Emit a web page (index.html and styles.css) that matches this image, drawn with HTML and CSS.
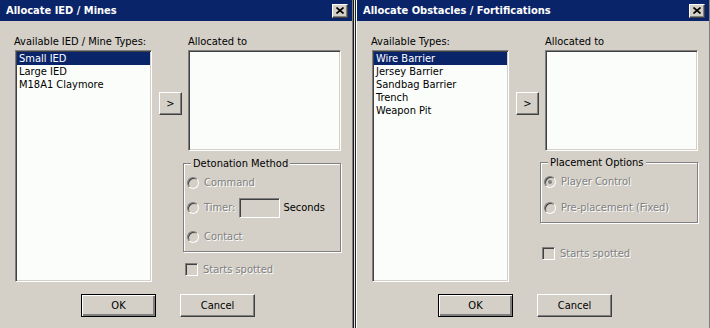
FILE: index.html
```html
<html>
	<head>
		<title>Allocate</title>
		<link rel="stylesheet" href="styles.css">
	</head>
	<body>
		<div class="desk">
			<div class="dialog">
				<div class="titlebar">
					<span class="title">Allocate IED / Mines</span>
					<span class="close"><svg width="8" height="7" viewBox="0 0 8 7"><path d="M0.5 0.5 L7.5 6.5 M7.5 0.5 L0.5 6.5" stroke="#000" stroke-width="1.6" fill="none"/></svg></span>
				</div>
				<div class="body">
					<div class="cols">
						<div class="col-list">
							<div class="label">Available IED / Mine Types:</div>
							<div class="listbox tall">
								<div class="item sel">Small IED</div>
								<div class="item">Large IED</div>
								<div class="item">M18A1 Claymore</div>
							</div>
						</div>
						<div class="col-mid">
							<div class="btn add">&gt;</div>
						</div>
						<div class="col-right">
							<div class="label indent">Allocated to</div>
							<div class="listbox alloc"></div>
							<div class="group det">
								<div class="group-title">Detonation Method</div>
								<div class="opt"><span class="radio"></span><span class="dis">Command</span></div>
								<div class="opt"><span class="radio"></span><span class="dis">Timer:</span><span class="field"></span><span class="unit">Seconds</span></div>
								<div class="opt"><span class="radio"></span><span class="dis">Contact</span></div>
							</div>
							<div class="check-row det-check"><span class="check"></span><span class="dis">Starts spotted</span></div>
						</div>
					</div>
					<div class="footer">
						<div class="btn push default">OK</div>
						<div class="btn push">Cancel</div>
					</div>
				</div>
			</div>
			<div class="dialog">
				<div class="titlebar">
					<span class="title">Allocate Obstacles / Fortifications</span>
					<span class="close"><svg width="8" height="7" viewBox="0 0 8 7"><path d="M0.5 0.5 L7.5 6.5 M7.5 0.5 L0.5 6.5" stroke="#000" stroke-width="1.6" fill="none"/></svg></span>
				</div>
				<div class="body">
					<div class="cols">
						<div class="col-list">
							<div class="label">Available Types:</div>
							<div class="listbox tall">
								<div class="item sel">Wire Barrier</div>
								<div class="item">Jersey Barrier</div>
								<div class="item">Sandbag Barrier</div>
								<div class="item">Trench</div>
								<div class="item">Weapon Pit</div>
							</div>
						</div>
						<div class="col-mid">
							<div class="btn add">&gt;</div>
						</div>
						<div class="col-right">
							<div class="label indent">Allocated to</div>
							<div class="listbox alloc"></div>
							<div class="group place">
								<div class="group-title">Placement Options</div>
								<div class="opt"><span class="radio on"></span><span class="dis">Player Control</span></div>
								<div class="opt"><span class="radio"></span><span class="dis">Pre-placement (Fixed)</span></div>
							</div>
							<div class="check-row place-check"><span class="check"></span><span class="dis">Starts spotted</span></div>
						</div>
					</div>
					<div class="footer">
						<div class="btn push default">OK</div>
						<div class="btn push">Cancel</div>
					</div>
				</div>
			</div>
		</div>
	</body>
</html>
```

FILE: styles.css
```css
body
{
	margin: 0;
	width: 710px;
	height: 328px;
	overflow: hidden;
	background: #d4d0c8;
	font-family: "DejaVu Sans Condensed", "Liberation Sans", sans-serif;
	font-size: 11px;
	line-height: 13px;
	color: #000000;
}

.desk
{
	display: flex;
	margin-left: -3px;
}

.dialog
{
	flex: none;
	width: 357px;
	height: 340px;
	box-sizing: border-box;
	border-left: 3px solid transparent;
	border-right: 2px solid transparent;
	background:
		linear-gradient(to right, #e2e2e2 1px, #222222 1px 2px, #ffffff 2px 3px, transparent 3px) left top / 3px 100% no-repeat border-box,
		linear-gradient(to right, #808080 1px, #1a1a1a 1px) right top / 2px 100% no-repeat border-box,
		#d4d0c8;
}

.titlebar
{
	height: 21px;
	background: #0a246a;
	display: flex;
	align-items: center;
	justify-content: space-between;
	padding: 0 4px 0 6px;
}
.title
{
	color: #ffffff;
	font-weight: bold;
	font-size: 11px;
}
.close
{
	width: 16px;
	height: 14px;
	box-sizing: border-box;
	background: #d4d0c8;
	border: 1px solid;
	border-color: #ffffff #404040 #404040 #ffffff;
	box-shadow: inset -1px -1px #808080;
	display: flex;
	align-items: center;
	justify-content: center;
}

.body
{
	padding: 14px 0 0 15px;
}
.cols
{
	display: flex;
}

.label
{
	height: 13px;
	white-space: nowrap;
	margin-left: -1px;
}
.label.indent
{
	margin-left: 5px;
}

.listbox
{
	box-sizing: border-box;
	background: #fafdf9;
	border: 1px solid;
	border-color: #808080 #ffffff #ffffff #808080;
	box-shadow: inset 1px 1px #404040, inset -1px -1px #d4d0c8;
	padding: 1px 1px 1px 1px;
}
.listbox.tall
{
	width: 137px;
	height: 232px;
	margin-top: 2px;
}
.listbox.alloc
{
	width: 153px;
	height: 101px;
	margin-top: 2px;
	margin-left: 5px;
}
.item
{
	height: 13px;
	padding-left: 2px;
	white-space: nowrap;
}
.item.sel
{
	background: #0a246a;
	color: #ffffff;
}

.col-list
{
	width: 137px;
}
.col-mid
{
	margin-left: 7px;
	padding-top: 57px;
}
.col-right
{
	margin-left: 1px;
	width: 158px;
}

.btn
{
	box-sizing: border-box;
	background: #d4d0c8;
	border: 1px solid;
	border-color: #ffffff #404040 #404040 #ffffff;
	box-shadow: inset -1px -1px #808080;
	display: flex;
	align-items: center;
	justify-content: center;
}
.btn.add
{
	width: 23px;
	height: 23px;
}

.group
{
	border: 1px solid #808080;
	box-shadow: inset 1px 1px #ffffff, 1px 1px #ffffff;
	padding: 0 0 2px 3px;
}
.group.det
{
	margin-top: 12px;
}
.group.place
{
	margin-top: 11px;
}
.group-title
{
	margin-top: -7px;
	margin-left: 4px;
	padding: 0 2px;
	width: fit-content;
	background: #d4d0c8;
}

.opt
{
	height: 25px;
	display: flex;
	align-items: center;
	white-space: nowrap;
}
.det .opt:last-child
{
	margin-top: 4px;
}
.place .opt:last-child
{
	margin-top: 1px;
}

.radio
{
	position: relative;
	flex: none;
	width: 12px;
	height: 12px;
	box-sizing: border-box;
	border-radius: 50%;
	border: 1px solid;
	border-color: #808080 #ffffff #ffffff #808080;
	box-shadow: inset 1px 1px #404040;
	background: #d4d0c8;
	margin-right: 5px;
}
.radio.on::after
{
	content: "";
	position: absolute;
	left: 3px;
	top: 3px;
	width: 4px;
	height: 4px;
	border-radius: 50%;
	background: #808080;
}

.dis
{
	color: #808080;
	text-shadow: 1px 1px #ffffff;
}

.field
{
	width: 41px;
	height: 20px;
	box-sizing: border-box;
	margin-left: 4px;
	border: 1px solid;
	border-color: #808080 #ffffff #ffffff #808080;
	box-shadow: inset 1px 1px #404040;
	background: #d4d0c8;
}
.unit
{
	margin-left: 3px;
}

.check-row
{
	display: flex;
	align-items: center;
	height: 20px;
	padding-left: 2px;
	white-space: nowrap;
}
.det-check
{
	margin-top: 7px;
}
.place-check
{
	margin-top: 20px;
}
.check
{
	width: 13px;
	height: 13px;
	box-sizing: border-box;
	border: 1px solid;
	border-color: #808080 #ffffff #ffffff #808080;
	box-shadow: inset 1px 1px #404040;
	background: #d4d0c8;
	margin-right: 5px;
}

.footer
{
	display: flex;
	gap: 24px;
	margin-top: 12px;
	padding-left: 66px;
}
.btn.push
{
	width: 75px;
	height: 23px;
}
.btn.default
{
	outline: 1px solid #000000;
	outline-offset: -1px;
	border-color: #000000;
	box-shadow: inset 1px 1px #ffffff, inset -2px -2px #808080, inset -1px -1px #404040;
}
```
